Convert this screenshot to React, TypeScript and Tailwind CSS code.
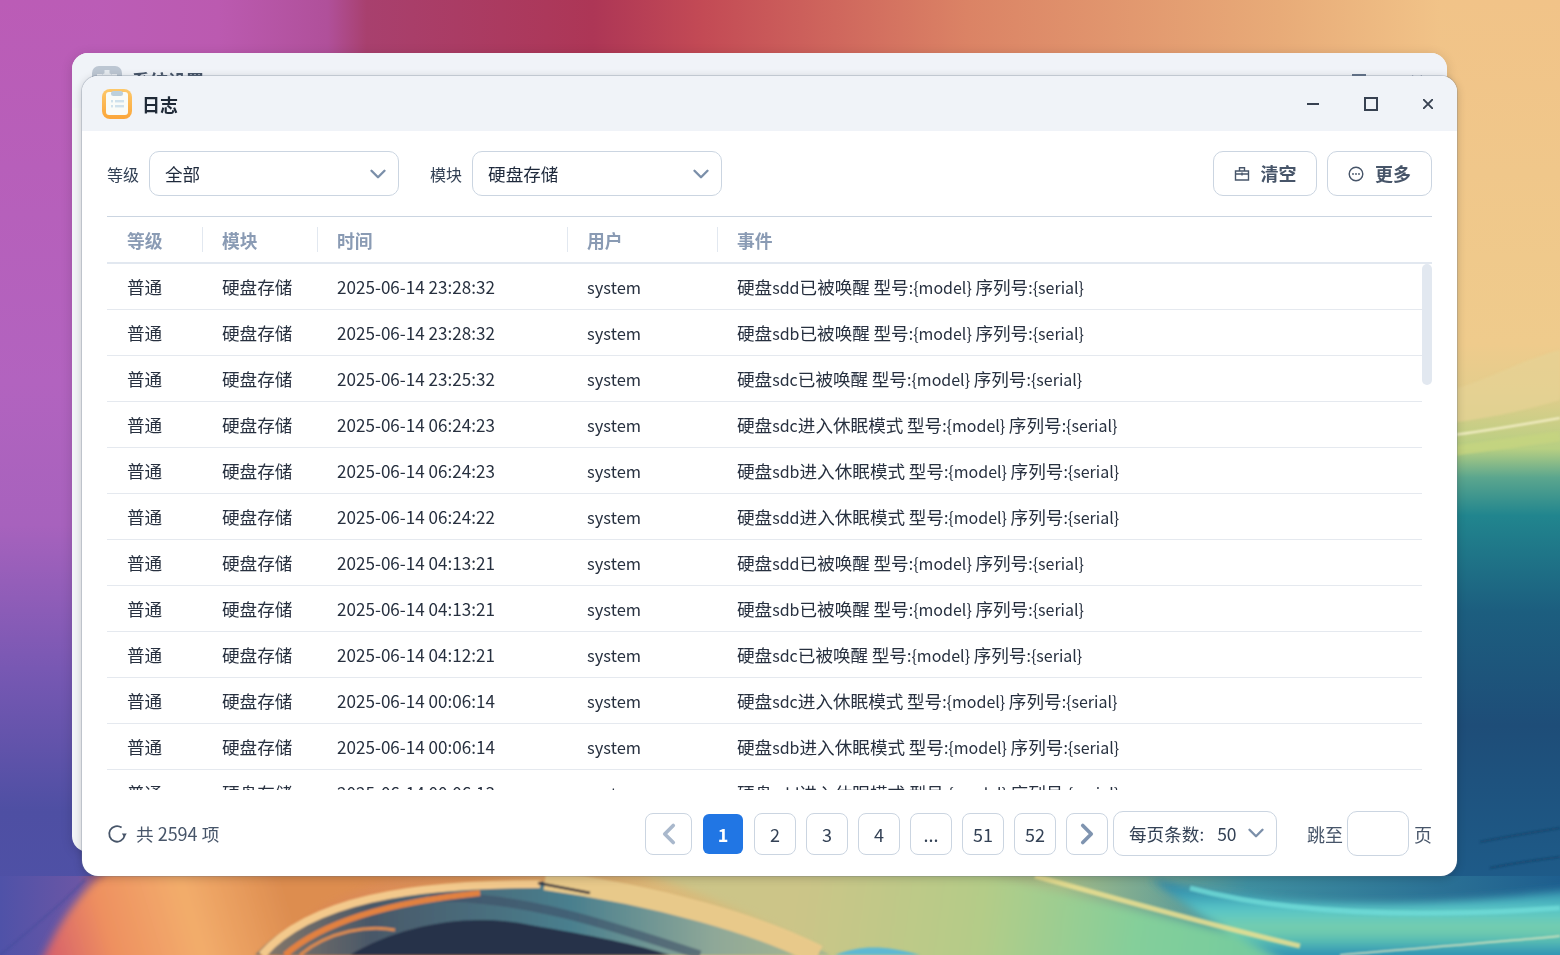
import React from "react";
import { ChevronDown, ChevronLeft, ChevronRight } from "lucide-react";

function T({ s, latin = "text-[17px]" }: { s: string; latin?: "text-[17px]" | "text-[16px]" | "text-[17.1px]" | "text-[16.5px]" | "text-[18px]" }) {
  const parts = s.split(/([\u3000-\u9fff\uff00-\uffef]+)/).filter(Boolean);
  return (
    <>
      {parts.map((p, i) =>
        /[\u3000-\u9fff\uff00-\uffef]/.test(p) ? (
          <span key={i} className="text-[17.6px]">{p}</span>
        ) : (
          <span key={i} className={latin}>{p}</span>
        )
      )}
    </>
  );
}

function Wallpaper() {
  return (
    <svg className="absolute inset-0" width="1560" height="955" viewBox="0 0 1560 955" aria-hidden="true">
      <defs>
        <linearGradient id="top" x1="0" x2="1" y1="0" y2="0">
          <stop offset="0" stopColor="#bb5fbb" />
          <stop offset="0.14" stopColor="#bb5ab0" />
          <stop offset="0.21" stopColor="#b0509a" />
          <stop offset="0.235" stopColor="#a8406e" />
          <stop offset="0.38" stopColor="#ad3656" />
          <stop offset="0.45" stopColor="#c34a55" />
          <stop offset="0.62" stopColor="#db8365" />
          <stop offset="0.82" stopColor="#e8ab78" />
          <stop offset="0.923" stopColor="#f1c388" />
          <stop offset="1" stopColor="#f3c78f" />
        </linearGradient>
        <linearGradient id="left" x1="0" x2="0" y1="0" y2="1">
          <stop offset="0" stopColor="#bb5cb6" />
          <stop offset="0.4" stopColor="#b263bf" />
          <stop offset="0.55" stopColor="#a762bd" />
          <stop offset="0.7" stopColor="#7858b3" />
          <stop offset="0.85" stopColor="#4e4fa3" />
          <stop offset="1" stopColor="#4f52a8" />
        </linearGradient>
        <linearGradient id="right" x1="0" x2="0" y1="0" y2="1">
          <stop offset="0" stopColor="#f1c388" />
          <stop offset="0.36" stopColor="#efcb8c" />
          <stop offset="0.41" stopColor="#e3cd8c" />
          <stop offset="0.47" stopColor="#b7cf82" />
          <stop offset="0.5" stopColor="#5ba68e" />
          <stop offset="0.54" stopColor="#21858e" />
          <stop offset="0.64" stopColor="#1c5e7f" />
          <stop offset="0.76" stopColor="#1e4d78" />
          <stop offset="1" stopColor="#1e6291" />
        </linearGradient>
        <linearGradient id="bottom" x1="0" x2="1" y1="0" y2="0">
          <stop offset="0" stopColor="#4f52a8" />
          <stop offset="0.05" stopColor="#6a56a5" />
          <stop offset="0.075" stopColor="#c0605c" />
          <stop offset="0.14" stopColor="#d97f55" />
          <stop offset="0.3" stopColor="#dd9458" />
          <stop offset="0.42" stopColor="#dcb878" />
          <stop offset="0.55" stopColor="#c9c284" />
          <stop offset="0.68" stopColor="#a4bc88" />
          <stop offset="0.8" stopColor="#3f8fa0" />
          <stop offset="1" stopColor="#1e5e8e" />
        </linearGradient>
        <linearGradient id="arcFill" x1="0" x2="1" y1="0" y2="0">
          <stop offset="0" stopColor="#8a7a6a" />
          <stop offset="0.2" stopColor="#4a5868" />
          <stop offset="0.55" stopColor="#4a7f8e" />
          <stop offset="0.8" stopColor="#8fa898" />
          <stop offset="1" stopColor="#aab890" />
        </linearGradient>
        <linearGradient id="orange" gradientUnits="userSpaceOnUse" x1="50" y1="950" x2="280" y2="880">
          <stop offset="0" stopColor="#d8636a" />
          <stop offset="0.25" stopColor="#ee9060" />
          <stop offset="0.6" stopColor="#f3ad6c" />
          <stop offset="1" stopColor="#dd8d50" />
        </linearGradient>
        <linearGradient id="green" gradientUnits="userSpaceOnUse" x1="800" y1="880" x2="1320" y2="955">
          <stop offset="0" stopColor="#ccc588" />
          <stop offset="0.35" stopColor="#b4cc88" />
          <stop offset="0.65" stopColor="#84cf9a" />
          <stop offset="1" stopColor="#6cc9a0" />
        </linearGradient>
        <linearGradient id="cyan" gradientUnits="userSpaceOnUse" x1="0" y1="885" x2="0" y2="955">
          <stop offset="0" stopColor="#2a84a8" />
          <stop offset="0.35" stopColor="#58c6c8" />
          <stop offset="0.62" stopColor="#78cfac" />
          <stop offset="0.8" stopColor="#56bcb4" />
          <stop offset="1" stopColor="#2f92b4" />
        </linearGradient>
        <filter id="soft" x="-5%" y="-20%" width="110%" height="140%"><feGaussianBlur stdDeviation="1.2" /></filter>
        <filter id="soft3" x="-10%" y="-30%" width="120%" height="160%"><feGaussianBlur stdDeviation="4" /></filter>
      </defs>
      <rect width="1560" height="955" fill="url(#top)" />
      <rect x="0" y="0" width="100" height="955" fill="url(#left)" />
      <rect x="1440" y="0" width="120" height="955" fill="url(#right)" />
      <rect x="0" y="876" width="1560" height="79" fill="url(#bottom)" />
      <g filter="url(#soft3)">
        <path d="M40,965 L270,965 C300,910 360,885 420,872 L110,870 C80,890 60,920 40,965 Z" fill="url(#orange)" />
        <path d="M830,965 L1340,965 C1240,930 1100,905 980,872 L640,872 C720,900 790,930 830,965 Z" fill="url(#green)" />
        <path d="M1150,878 C1280,912 1420,908 1570,890 L1570,965 L1290,965 C1240,940 1190,910 1150,878 Z" fill="url(#cyan)" />
      </g>
      <g filter="url(#soft)">
        <path d="M1440,392 C1480,385 1520,360 1560,350 L1560,400 C1520,412 1480,420 1440,424 Z" fill="#e6d294" opacity="0.75" />
        <path d="M1445,436 C1480,432 1520,425 1560,418" stroke="#f8f2cc" strokeWidth="2" fill="none" />
        <path d="M1445,452 C1480,447 1520,442 1560,436" stroke="#c6d57f" strokeWidth="10" fill="none" opacity="0.8" />
        <path d="M255,955 C310,895 420,880 545,882 C650,885 770,920 830,955 Z" fill="url(#arcFill)" />
        <path d="M350,955 C400,925 470,912 530,925 C590,935 640,945 670,955 Z" fill="#253048" />
        <path d="M300,955 C330,930 370,925 395,930" stroke="#d98a50" strokeWidth="3" fill="none" />
        <path d="M430,897 C520,895 610,925 700,955" stroke="#3e4f66" strokeWidth="9" fill="none" opacity="0.6" />
        <path d="M262,955 C310,900 410,884 540,884" stroke="#f3c98c" strokeWidth="8" fill="none" />
        <path d="M285,955 C330,915 410,900 480,893" stroke="#e2813f" strokeWidth="6" fill="none" />
        <path d="M545,880 C660,896 760,925 818,955" stroke="#e8c98a" strokeWidth="20" fill="none" />
        <path d="M538,883 L590,893" stroke="#25283a" strokeWidth="2.5" fill="none" />
        <path d="M835,955 C860,945 885,945 920,955 Z" fill="#5eb8d2" />
        <path d="M1035,876 C1120,900 1210,925 1300,946" stroke="#ecdf90" strokeWidth="5" fill="none" opacity="0.85" />
        <path d="M1190,888 C1290,915 1420,918 1560,908" stroke="#6fdcd8" strokeWidth="5" fill="none" opacity="0.8" />
        <path d="M1340,955 C1420,948 1500,942 1560,936" stroke="#e8e8c0" strokeWidth="1.5" fill="none" />
        <path d="M0,955 C30,930 60,905 85,880" stroke="#3f4a98" strokeWidth="1" fill="none" />
        <path d="M1480,842 C1510,836 1535,832 1560,828" stroke="#163a5c" strokeWidth="1" fill="none" />
        <path d="M1490,868 C1510,864 1535,860 1560,857" stroke="#163a5c" strokeWidth="1" fill="none" />
      </g>
    </svg>
  );
}

function LogIcon() {
  return (
    <svg width="30" height="30" viewBox="0 0 30 30" aria-hidden="true">
      <defs>
        <linearGradient id="ic" x1="0" x2="0" y1="0" y2="1">
          <stop offset="0" stopColor="#fdc86a" />
          <stop offset="1" stopColor="#fba63a" />
        </linearGradient>
      </defs>
      <rect width="30" height="30" rx="8" fill="url(#ic)" />
      <rect x="4" y="3" width="22" height="23" rx="3" fill="#f9fbf8" />
      <rect x="9" y="2" width="12" height="5" rx="2.5" fill="#bcd0dc" />
      <rect x="9" y="11" width="2" height="2.4" fill="#cfe1ec" />
      <rect x="13" y="11" width="9" height="2.4" fill="#cfe1ec" />
      <rect x="9" y="16" width="2" height="2.4" fill="#cfe1ec" />
      <rect x="13" y="16" width="9" height="2.4" fill="#cfe1ec" />
    </svg>
  );
}

function GearIcon() {
  return (
    <svg width="30" height="30" viewBox="0 0 30 30" aria-hidden="true">
      <rect width="30" height="30" rx="7" fill="#bcc6d2" />
      <circle cx="15" cy="15" r="8" fill="#e6ebf0" />
      <rect x="12.5" y="4" width="5" height="5" fill="#e6ebf0" />
      <rect x="5" y="8" width="5" height="5" fill="#e6ebf0" />
      <rect x="20" y="8" width="5" height="5" fill="#e6ebf0" />
    </svg>
  );
}

function Select({ label, w }: { label: string; w: string }) {
  return (
    <div className={`flex h-[45px] ${w} items-center justify-between rounded-[10px] border border-[#cbd5e1] bg-white pl-[15px] pr-[7px] text-[#1e293b]`}>
      <span className="pt-[2px]"><T s={label} /></span>
      <ChevronDown size={26} strokeWidth={2.2} className="text-[#7b8fa9]" />
    </div>
  );
}

const rows: [string, string, string][] = [
  ["2025-06-14 23:28:32", "sdd", "已被唤醒"],
  ["2025-06-14 23:28:32", "sdb", "已被唤醒"],
  ["2025-06-14 23:25:32", "sdc", "已被唤醒"],
  ["2025-06-14 06:24:23", "sdc", "进入休眠模式"],
  ["2025-06-14 06:24:23", "sdb", "进入休眠模式"],
  ["2025-06-14 06:24:22", "sdd", "进入休眠模式"],
  ["2025-06-14 04:13:21", "sdd", "已被唤醒"],
  ["2025-06-14 04:13:21", "sdb", "已被唤醒"],
  ["2025-06-14 04:12:21", "sdc", "已被唤醒"],
  ["2025-06-14 00:06:14", "sdc", "进入休眠模式"],
  ["2025-06-14 00:06:14", "sdb", "进入休眠模式"],
  ["2025-06-14 00:06:13", "sdd", "进入休眠模式"],
];

function PageBtn({ children }: { children: React.ReactNode }) {
  return (
    <div className="flex h-[42px] w-[42px] items-center justify-center rounded-[8px] border border-[#cbd5e1] bg-white text-[18px] text-[#334155]">
      {children}
    </div>
  );
}

function Th({ w, label, sep }: { w: string; label: string; sep?: boolean }) {
  return (
    <div className={`relative flex h-full items-center pl-[20px] pt-[2px] text-[17.8px] font-bold text-[#8a9bb4] ${w}`}>
      {sep && <div className="absolute left-0 top-[10px] h-[25px] w-px bg-[#e2e8f0]" />}
      {label}
    </div>
  );
}

export default function App() {
  return (
    <div className="relative h-[955px] w-[1560px] overflow-hidden font-['Noto_Sans_CJK_SC',sans-serif]">
      <Wallpaper />

      <div className="absolute left-[72px] top-[53px] h-[799px] w-[1375px] overflow-hidden rounded-[16px] bg-[#f2f4f7] shadow-[0_2px_12px_rgba(0,0,0,0.15)]">
        <div className="flex h-[55px] items-center gap-[10px] bg-[#f0f3f8] px-[20px] text-[18px] font-bold text-[#475569]">
          <GearIcon />
          <span>系统设置</span>
          <div className="ml-auto flex items-center gap-[45px] pr-[4px] text-[#64748b]">
            <svg width="14" height="14" viewBox="0 0 14 14" fill="none" stroke="currentColor" strokeWidth="2" aria-hidden="true"><path d="M1 1h12v12H1z" /></svg>
            <svg width="12" height="12" viewBox="0 0 12 12" fill="none" stroke="currentColor" strokeWidth="2" aria-hidden="true"><path d="M1 1l10 10M11 1L1 11" /></svg>
          </div>
        </div>
      </div>

      <div className="absolute left-[82px] top-[76px] flex h-[800px] w-[1375px] flex-col overflow-hidden rounded-[16px] bg-white shadow-[0_0_0_1px_rgba(100,116,139,0.25),0_2px_10px_rgba(0,0,0,0.2)]">
        <div className="flex h-[55px] shrink-0 items-center bg-[#f0f3f8] pl-[20px] pr-[24px]">
          <LogIcon />
          <span className="ml-[10px] pt-[2px] text-[18px] font-bold text-[#1f2937]">日志</span>
          <div className="ml-auto flex items-center text-[#374151]">
            <svg width="12" height="14" viewBox="0 0 12 14" fill="none" stroke="currentColor" strokeWidth="2" className="mr-[45px]" aria-hidden="true"><path d="M0 7h12" /></svg>
            <svg width="14" height="14" viewBox="0 0 14 14" fill="none" stroke="currentColor" strokeWidth="2" className="mr-[45px]" aria-hidden="true"><path d="M1 1h12v12H1z" /></svg>
            <svg width="10" height="10" viewBox="0 0 10 10" fill="none" stroke="currentColor" strokeWidth="1.9" aria-hidden="true"><path d="M0 0l10 10M10 0L0 10" /></svg>
          </div>
        </div>

        <div className="flex min-h-0 flex-1 flex-col px-[25px]">
          <div className="flex h-[86px] shrink-0 items-center border-b border-[#cbd5e1]">
            <span className="mr-[10px] text-[16px] text-[#334155]">等级</span>
            <Select label="全部" w="w-[250px]" />
            <span className="ml-[31px] mr-[10px] text-[16px] text-[#334155]">模块</span>
            <Select label="硬盘存储" w="w-[250px]" />
            <div className="ml-auto flex items-center gap-[10px] text-[18px] font-bold text-[#475569]">
              <div className="flex h-[45px] w-[104px] items-center justify-center gap-[11px] rounded-[10px] border border-[#cbd5e1]">
                <svg width="16" height="16" viewBox="0 0 16 16" fill="none" stroke="currentColor" strokeWidth="1.4" aria-hidden="true">
                  <path d="M1.5 8h13M1.5 5h13v9h-13zM5.5 5V1.8h5V5M8 6.5v3" />
                </svg>
                清空
              </div>
              <div className="flex h-[45px] w-[105px] items-center justify-center gap-[11px] rounded-[10px] border border-[#cbd5e1]">
                <svg width="16" height="16" viewBox="0 0 16 16" fill="none" aria-hidden="true">
                  <circle cx="8" cy="8" r="6.8" stroke="currentColor" strokeWidth="1.4" />
                  <circle cx="5" cy="8" r="0.9" fill="currentColor" />
                  <circle cx="8" cy="8" r="0.9" fill="currentColor" />
                  <circle cx="11" cy="8" r="0.9" fill="currentColor" />
                </svg>
                更多
              </div>
            </div>
          </div>

          <div className="flex h-[47px] shrink-0 items-center border-b-2 border-[#e2e8f0]">
            <Th w="w-[95px]" label="等级" />
            <Th w="w-[115px]" label="模块" sep />
            <Th w="w-[250px]" label="时间" sep />
            <Th w="w-[150px]" label="用户" sep />
            <Th w="flex-1" label="事件" sep />
          </div>

          <div className="relative h-[526px] shrink-0 overflow-hidden">
            <div className="absolute right-0 top-0 h-[121px] w-[10px] rounded-full bg-[#e2e8f0]" />
            <div className="w-[1315px]">
              {rows.map((r, i) => (
                <div key={i} className="flex h-[46px] items-center border-b border-[#e5e9ef] pt-[2px] text-[#27303f]">
                  <div className="w-[95px] pl-[20px]"><T s="普通" /></div>
                  <div className="w-[115px] pl-[20px]"><T s="硬盘存储" /></div>
                  <div className="-mt-[2px] w-[250px] pl-[20px]"><T s={r[0]} latin="text-[17.1px]" /></div>
                  <div className="w-[150px] pl-[20px]"><T s="system" latin="text-[16.5px]" /></div>
                  <div className="flex-1 pl-[20px]">
                    <T s={`硬盘${r[1]}${r[2]} 型号:{model} 序列号:{serial}`} latin="text-[16px]" />
                  </div>
                </div>
              ))}
            </div>
          </div>

          <div className="flex min-h-0 flex-1 items-center pt-[2px] text-[#334155]">
            <svg width="20" height="20" viewBox="0 0 20 20" fill="none" aria-hidden="true" className="mr-[9px] text-[#475569]">
              <path d="M14.6 3.6A7.8 7.8 0 1 0 17.6 11.6" stroke="currentColor" strokeWidth="1.8" />
              <path d="M14.8 9.6h5l-2.5 3.6z" fill="currentColor" />
            </svg>
            <span className="text-[#475569]"><T s="共 2594 项" latin="text-[18px]" /></span>

            <div className="ml-auto flex items-center gap-[10px]">
              <div className="flex h-[42px] w-[47px] items-center justify-center rounded-[8px] border border-[#cbd5e1]">
                <ChevronLeft size={34} strokeWidth={2.6} className="text-[#a9b8cc]" />
              </div>
              <div className="mx-px flex h-[40px] w-[40px] items-center justify-center rounded-[6px] bg-[#2176e4] text-[18px] font-bold text-white">1</div>
              <PageBtn>2</PageBtn>
              <PageBtn>3</PageBtn>
              <PageBtn>4</PageBtn>
              <PageBtn>...</PageBtn>
              <PageBtn>51</PageBtn>
              <PageBtn>52</PageBtn>
              <PageBtn><ChevronRight size={34} strokeWidth={2.6} className="text-[#7f94b0]" /></PageBtn>
            </div>
            <div className="-mt-[2px] ml-[5px] flex h-[45px] w-[164px] items-center justify-between rounded-[10px] border border-[#cbd5e1] pl-[15px] pr-[7px] text-[#334155]">
              <span className="pt-[2px]"><T s="每页条数:" latin="text-[17px]" /><span className="ml-[13px] text-[17.5px]">50</span></span>
              <ChevronDown size={26} strokeWidth={2.2} className="text-[#7b8fa9]" />
            </div>
            <span className="ml-[30px] mr-[4px] text-[18px] text-[#475569]">跳至</span>
            <div className="-mt-[2px] h-[45px] w-[62px] rounded-[10px] border border-[#cbd5e1]" />
            <span className="ml-[5px] text-[18px] text-[#475569]">页</span>
          </div>
        </div>
      </div>
    </div>
  );
}
